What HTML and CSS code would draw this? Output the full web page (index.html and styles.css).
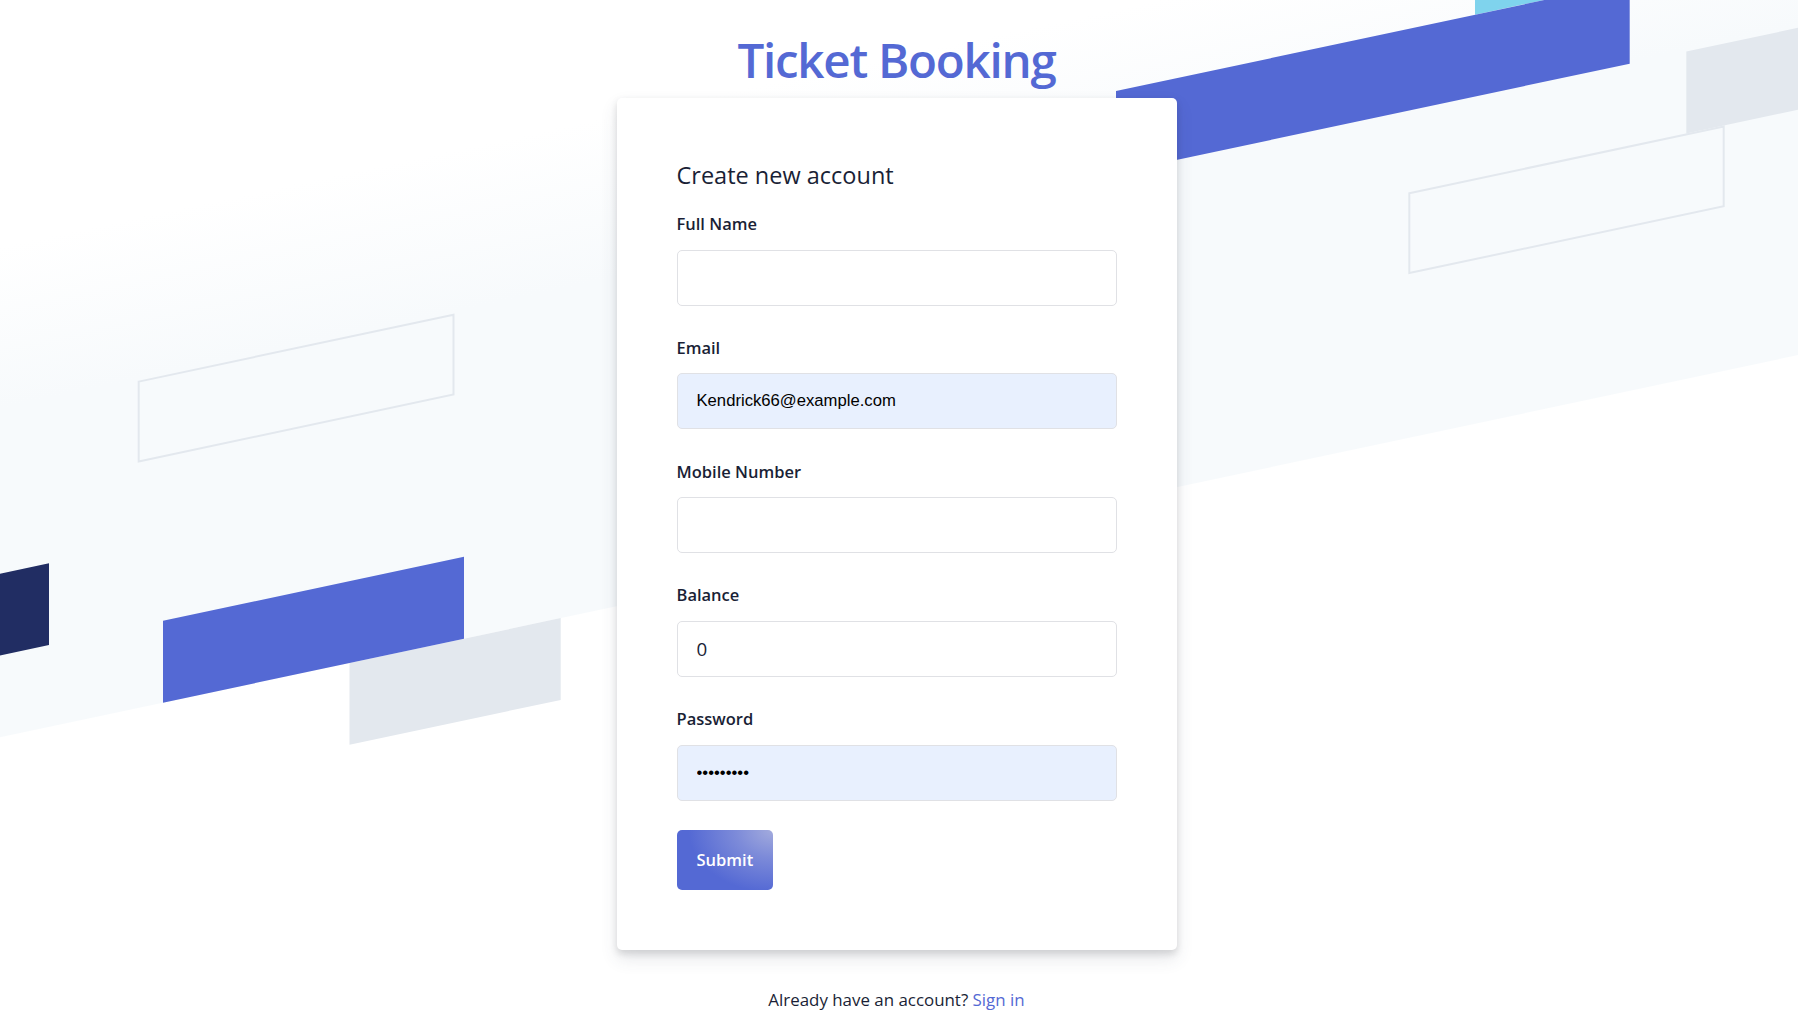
FILE: index.html
```html
<!DOCTYPE html>
<html lang="en">
<head>
<meta charset="utf-8">
<title>Ticket Booking</title>
<link rel="stylesheet" href="styles.css">
</head>
<body>
<div class="page">
  <svg class="backdrop" width="1798" height="1017" viewBox="0 0 1798 1017" aria-hidden="true">
    <defs>
      <linearGradient id="bandGrad" gradientUnits="userSpaceOnUse" x1="0" y1="246.5" x2="32.95" y2="401.5">
        <stop offset="0" stop-color="#ffffff"/>
        <stop offset="1" stop-color="#f7fafc"/>
      </linearGradient>
    </defs>
    <polygon points="0,0 1798,0 1798,355.05 0,737.3" fill="url(#bandGrad)"/>
    <polygon points="138.7,381.61 453.5,314.69 453.5,394.49 138.7,461.41" fill="none" stroke="#e3e8ee" stroke-width="2"/>
    <polygon points="-10,575.83 49,563.28 49,645.08 -10,657.63" fill="#212d63"/>
    <polygon points="349.5,663.0 560.7,618.1 560.7,699.9 349.5,744.8" fill="#e3e8ee"/>
    <polygon points="163,620.85 464,556.85 464,638.65 163,702.65" fill="#5469d4"/>
    <polygon points="1475,-67.1 1810,-138.3 1810,-56.5 1475,14.71" fill="#7fd3ed"/>
    <polygon points="1116,91.04 1629.7,-18.17 1629.7,63.63 1116,172.84" fill="#5469d4"/>
    <polygon points="1686.3,51.59 1810,25.29 1810,107.09 1686.3,133.39" fill="#e3e8ee"/>
    <polygon points="1409.3,193.28 1723.7,126.44 1723.7,206.24 1409.3,273.08" fill="none" stroke="#e3e8ee" stroke-width="2"/>
  </svg>

  <main class="content">
    <h1 class="brand">Ticket Booking</h1>
    <div class="card">
      <h2 class="card-title">Create new account</h2>
      <form class="form" onsubmit="return false">
        <div class="field">
          <label class="field-label" for="fullname">Full Name</label>
          <input class="field-input" id="fullname" type="text">
        </div>
        <div class="field">
          <label class="field-label" for="email">Email</label>
          <input class="field-input is-autofill" id="email" type="email" value="Kendrick66@example.com">
        </div>
        <div class="field">
          <label class="field-label" for="mobile">Mobile Number</label>
          <input class="field-input" id="mobile" type="text">
        </div>
        <div class="field">
          <label class="field-label" for="balance">Balance</label>
          <input class="field-input" id="balance" type="text" value="0">
        </div>
        <div class="field">
          <label class="field-label" for="password">Password</label>
          <input class="field-input is-autofill" id="password" type="password" value="secret123">
        </div>
        <button class="submit" type="submit">Submit</button>
      </form>
    </div>
    <p class="footer-note">Already have an account? <a class="footer-link" href="#">Sign in</a></p>
  </main>
</div>
</body>
</html>
```

FILE: styles.css
```css
* {
  box-sizing: border-box;
}

html,
body {
  margin: 0;
  padding: 0;
}

body {
  font-family: "Open Sans", "Noto Sans", sans-serif;
  background: #ffffff;
  color: #1a1f36;
}

.page {
  position: relative;
  height: 100vh;
  overflow: hidden;
  background: #ffffff;
}

.backdrop {
  position: absolute;
  top: 0;
  left: 0;
  z-index: 0;
  display: block;
}

.content {
  position: relative;
  z-index: 1;
  display: flex;
  flex-direction: column;
  align-items: center;
  padding: 35.5px 5px 0 0;
}

.brand {
  margin: 0 0 14px;
  font-size: 47.5px;
  line-height: 48px;
  font-weight: 600;
  letter-spacing: -1.25px;
  color: #5469d4;
}

.card {
  width: 560px;
  padding: 60px;
  background: #ffffff;
  border-radius: 5px;
  box-shadow: rgba(60, 66, 87, 0.12) 0 8.75px 17.5px 0, rgba(0, 0, 0, 0.12) 0 3.75px 7.5px 0;
}

.card-title {
  margin: 0 0 18.75px;
  font-size: 23.5px;
  line-height: 35px;
  font-weight: 400;
  color: #1a1f36;
}

.form {
  display: flex;
  flex-direction: column;
  align-items: flex-start;
}

.field {
  width: 100%;
  padding-bottom: 29.2px;
}

.field-label {
  display: block;
  margin-bottom: 12.5px;
  font-size: 16.5px;
  line-height: 26px;
  font-weight: 600;
  color: #1a1f36;
}

.field-input {
  display: block;
  width: 100%;
  height: 56px;
  padding: 0 19px;
  border: 1px solid #e0e1e5;
  border-radius: 5px;
  background: #ffffff;
  font-family: "Open Sans", "Noto Sans", sans-serif;
  font-size: 18.8px;
  color: #1a1f36;
  outline: none;
}

.field-input.is-autofill {
  background: #e8f0fe;
  font-family: "Liberation Sans", Arial, sans-serif;
  font-size: 16.67px;
  color: #000000;
}

.submit {
  height: 60px;
  padding: 0 20px;
  border: none;
  border-radius: 5px;
  background: radial-gradient(ellipse 110% 130% at 100% 0%, #a3abdd 0%, #7d8bd9 35%, #5469d4 80%);
  color: #ffffff;
  font-family: "Open Sans", "Noto Sans", sans-serif;
  font-size: 16.5px;
  font-weight: 600;
  cursor: pointer;
}

.footer-note {
  margin: 32px 0 0;
  font-size: 16.9px;
  line-height: 35px;
  color: #1a1f36;
  text-align: center;
}

.footer-link {
  color: #5469d4;
  text-decoration: none;
}
```
